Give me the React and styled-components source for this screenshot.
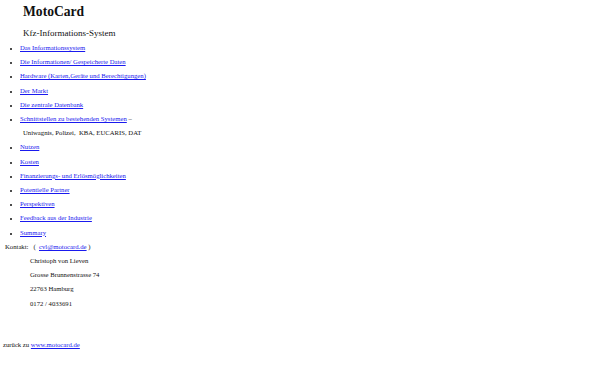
import React from "react";
import styled, { createGlobalStyle } from "styled-components";

const Global = createGlobalStyle`
  html, body { margin: 0; padding: 0; background: #ffffff; }
  body { font-family: "Liberation Serif", "Times New Roman", serif; color: #111; }
`;

const Page = styled.div`
  padding: 3px 0 0 0;
`;

const Title = styled.h1`
  margin: 0 0 0 23px;
  font-size: 13.6px;
  line-height: 18px;
  font-weight: bold;
`;

const Subtitle = styled.div`
  margin: 5px 0 0 23px;
  font-size: 9px;
  line-height: 14px;
`;

const List = styled.ul`
  margin: ${(p) => p.$top}px 0 0 0;
  padding: 0 0 0 20px;
  list-style: disc;
  font-size: 6.7px;
  line-height: 14.2px;
`;

const Item = styled.li`
  &::marker { font-size: 6px; }
`;

const Link = styled.a`
  color: #1a1aee;
  text-decoration: underline;
`;

const Note = styled.div`
  margin-left: ${(p) => p.$indent}px;
  font-size: 6.7px;
  line-height: 14.2px;
`;

const Contact = styled.div`
  font-size: 6.7px;
  line-height: 14.2px;
  padding-left: 5px;
`;

const Address = styled.div`
  padding-left: 30px;
  font-size: 6.7px;
  line-height: 14.2px;
`;

const Back = styled.div`
  margin-top: 27px;
  padding-left: 3px;
  font-size: 6.7px;
  line-height: 14.2px;
`;

const items = [
  "Das Informationssystem",
  "Die Informationen/ Gespeicherte Daten",
  "Hardware (Karten,Geräte und Berechtigungen)",
  "Der Markt",
  "Die zentrale Datenbank",
];
const items2 = [
  "Nutzen",
  "Kosten",
  "Finanzierungs- und Erlösmöglichkeiten",
  "Potentielle Partner",
  "Perspektiven",
  "Feedback aus der Industrie",
  "Summary",
];

export default function App() {
  return (
    <Page>
      <Global />
      <Title>MotoCard</Title>
      <Subtitle>Kfz-Informations-System</Subtitle>
      <List $top={1}>
        {items.map((t) => (
          <Item key={t}>
            <Link href="#">{t}</Link>
          </Item>
        ))}
        <Item>
          <Link href="#">Schnittstellen zu bestehenden Systemen</Link> –
        </Item>
      </List>
      <Note $indent={23}>Uniwagnis, Polizei,&nbsp; KBA, EUCARIS, DAT</Note>
      <List $top={0}>
        {items2.map((t) => (
          <Item key={t}>
            <Link href="#">{t}</Link>
          </Item>
        ))}
      </List>
      <Contact>
        Kontakt:&nbsp;&nbsp; (&nbsp; <Link href="#">cvl@motocard.de</Link> )
      </Contact>
      <Address>Christoph von Lieven</Address>
      <Address>Grosse Brunnenstrasse 74</Address>
      <Address>22763 Hamburg</Address>
      <Address>0172 / 4033691</Address>
      <Back>
        zurück zu <Link href="#">www.motocard.de</Link>
      </Back>
    </Page>
  );
}
